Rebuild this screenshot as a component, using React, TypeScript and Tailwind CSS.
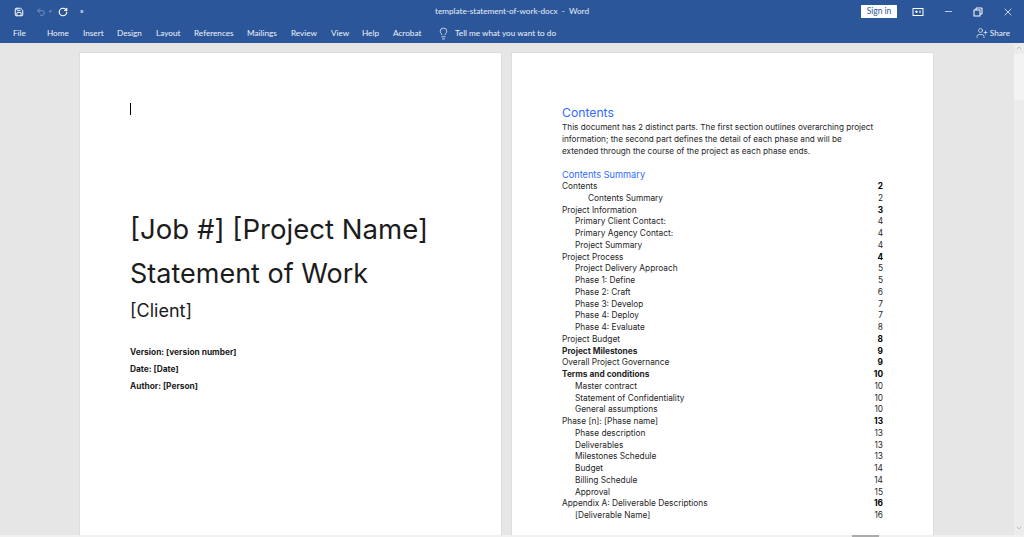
import { Lightbulb, Minus, Save, Undo2, RotateCw, X, UserPlus, ChevronUp, ChevronDown } from "lucide-react";

const TABS = [
  { label: "File", cls: "w-[34px]" },
  { label: "Home", cls: "w-[36px]" },
  { label: "Insert", cls: "w-[34px]" },
  { label: "Design", cls: "w-[39px]" },
  { label: "Layout", cls: "w-[38px]" },
  { label: "References", cls: "w-[53px]" },
  { label: "Mailings", cls: "w-[44px]" },
  { label: "Review", cls: "w-[40px]" },
  { label: "View", cls: "w-[31px]" },
  { label: "Help", cls: "w-[31px]" },
  { label: "Acrobat", cls: "w-[44px]" },
];

const TOC = [
  { text: "Contents", page: "2", level: 0, boldPage: true },
  { text: "Contents Summary", page: "2", level: 2 },
  { text: "Project Information", page: "3", level: 0, boldPage: true },
  { text: "Primary Client Contact:", page: "4", level: 1 },
  { text: "Primary Agency Contact:", page: "4", level: 1 },
  { text: "Project Summary", page: "4", level: 1 },
  { text: "Project Process", page: "4", level: 0, boldPage: true },
  { text: "Project Delivery Approach", page: "5", level: 1 },
  { text: "Phase 1: Define", page: "5", level: 1 },
  { text: "Phase 2: Craft", page: "6", level: 1 },
  { text: "Phase 3: Develop", page: "7", level: 1 },
  { text: "Phase 4: Deploy", page: "7", level: 1 },
  { text: "Phase 4: Evaluate", page: "8", level: 1 },
  { text: "Project Budget", page: "8", level: 0, boldPage: true },
  { text: "Project Milestones", page: "9", level: 0, boldPage: true, bold: true },
  { text: "Overall Project Governance", page: "9", level: 0, boldPage: true },
  { text: "Terms and conditions", page: "10", level: 0, boldPage: true, bold: true },
  { text: "Master contract", page: "10", level: 1 },
  { text: "Statement of Confidentiality", page: "10", level: 1 },
  { text: "General assumptions", page: "10", level: 1 },
  { text: "Phase [n]:  [Phase name]", page: "13", level: 0, boldPage: true },
  { text: "Phase description", page: "13", level: 1 },
  { text: "Deliverables", page: "13", level: 1 },
  { text: "Milestones Schedule", page: "13", level: 1 },
  { text: "Budget", page: "14", level: 1 },
  { text: "Billing Schedule", page: "14", level: 1 },
  { text: "Approval", page: "15", level: 1 },
  { text: "Appendix A: Deliverable Descriptions", page: "16", level: 0, boldPage: true },
  { text: "[Deliverable Name]", page: "16", level: 1 },
];

const INDENT = ["pl-0", "pl-[13px]", "pl-[26px]"];

function TitleBar() {
  return (
    <div className="flex h-[23px] items-center text-white">
      <div className="flex w-[300px] items-center pl-[14px]">
        <Save className="h-[10px] w-[10px]" strokeWidth={2.4} />
        <Undo2 className="ml-[12px] h-[10px] w-[10px] opacity-40" strokeWidth={2} />
        <span className="ml-[3px] text-[5px] opacity-40">▾</span>
        <RotateCw className="ml-[6px] h-[10px] w-[10px]" strokeWidth={2.8} />
        <span className="ml-[12px] text-[6px] leading-none">≡</span>
      </div>
      <div className="w-[300px] pl-[135px] text-[8.2px] whitespace-nowrap text-[#e8edf6]">template-statement-of-work-docx&nbsp; -&nbsp; Word</div>
      <div className="ml-auto flex items-center pr-[10px]">
        <div className="flex h-[13px] w-[36px] items-center justify-center bg-white text-[8.5px] text-[#2b579a]">Sign in</div>
        <svg className="ml-[15px] h-[10px] w-[12px]" viewBox="0 0 12 10" fill="none" stroke="currentColor" strokeWidth="1">
          <rect x="1" y="1.5" width="10" height="7" />
          <path d="M4.5 3.5v2.5M3 4.8h3M8 3.5v2.5" />
        </svg>
        <Minus className="ml-[19px] h-[11px] w-[11px]" strokeWidth={1.5} />
        <svg className="ml-[19px] h-[10px] w-[10px]" viewBox="0 0 10 10" fill="none" stroke="currentColor" strokeWidth="1">
          <rect x="1" y="3" width="6" height="6" />
          <path d="M3 3V1h6v6H7" />
        </svg>
        <X className="ml-[19px] h-[12px] w-[12px]" strokeWidth={1.5} />
      </div>
    </div>
  );
}

function Ribbon() {
  return (
    <div className="flex h-[20px] items-center text-[8.2px] text-[#eef2f8]">
      <div className="flex pl-[13px]">
        {TABS.map((t) => (
          <span key={t.label} className={t.cls}>{t.label}</span>
        ))}
      </div>
      <Lightbulb className="h-[13px] w-[13px]" strokeWidth={1.4} />
      <span className="ml-[5px]">Tell me what you want to do</span>
      <div className="ml-auto flex items-center pr-[14px]">
        <UserPlus className="h-[12px] w-[12px]" strokeWidth={1.4} />
        <span className="ml-[2px]">Share</span>
      </div>
    </div>
  );
}

function CoverPage() {
  return (
    <div className="h-[560px] w-[423px] border border-[#dcdcdc] bg-white pt-[50px] pl-[50px] text-[#1c1c1c]">
      <div className="h-[12px] w-px bg-black" />
      <h1 className="mt-[94px] text-[27.6px] leading-[40px] whitespace-nowrap">[Job #] [Project Name]</h1>
      <h2 className="mt-[5px] text-[27px] leading-[40px] whitespace-nowrap">Statement of Work</h2>
      <p className="mt-[5px] text-[18px] leading-[24px]">[Client]</p>
      <div className="mt-[23px] flex flex-col gap-[5px] text-[8.35px] leading-[12px] font-bold">
        <p>Version: [version number]</p>
        <p>Date: [Date]</p>
        <p>Author: [Person]</p>
      </div>
    </div>
  );
}

function ContentsPage() {
  return (
    <div className="h-[560px] w-[423px] border border-[#dcdcdc] bg-white px-[50px] pt-[51px] text-[#262626]">
      <h2 className="text-[12.2px] leading-[18px] text-[#2f6bff]">Contents</h2>
      <p className="mt-[-1px] w-[314px] text-[8.2px] leading-[12px]">
        This document has 2 distinct parts. The first section outlines overarching project information; the second part defines the detail of each phase and will be extended through the course of the project as each phase ends.
      </p>
      <h3 className="mt-[11px] text-[9.2px] leading-[13px] text-[#2f6bff]">Contents Summary</h3>
      <div className="text-[8.3px] leading-[11.75px]">
        {TOC.map((row) => (
          <div key={row.text} className={`flex justify-between ${INDENT[row.level]}`}>
            <span className={row.bold ? "font-bold" : ""}>{row.text}</span>
            <span className={row.boldPage ? "font-bold text-black" : ""}>{row.page}</span>
          </div>
        ))}
      </div>
    </div>
  );
}

function Scrollbar() {
  return (
    <div className="flex w-[10px] flex-col items-center bg-[#ececec] text-[#a8a8a8]">
      <ChevronUp className="h-[10px] w-[8px]" />
      <div className="mt-[1px] h-[46px] w-full bg-[#f3f3f3]" />
      <div className="flex-1" />
      <ChevronDown className="mb-[2px] h-[10px] w-[8px]" />
    </div>
  );
}

export default function App() {
  return (
    <div className="flex h-[537px] w-[1024px] flex-col overflow-hidden bg-[#e6e6e6] font-['Inter','Liberation_Sans',sans-serif]">
      <div className="h-[43px] shrink-0 bg-[#2b579a] font-['Lato','Liberation_Sans',sans-serif]">
        <TitleBar />
        <Ribbon />
      </div>
      <div className="flex min-h-0 flex-1">
        <div className="flex flex-1 items-start gap-[9px] overflow-hidden pt-[9px] pl-[79px]">
          <CoverPage />
          <ContentsPage />
        </div>
        <Scrollbar />
      </div>
      <div className="flex h-[2px] shrink-0 justify-center bg-[#f0f0f0]">
        <div className="ml-[706px] h-full w-[27px] bg-[#ababab]" />
      </div>
    </div>
  );
}
